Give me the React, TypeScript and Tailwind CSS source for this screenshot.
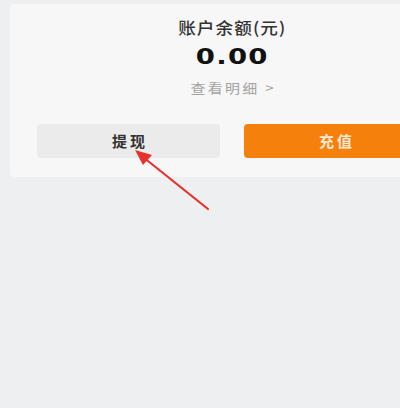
import React from "react";

export default function App() {
  const cjk = { fontFamily: '"Noto Sans CJK SC", "Noto Sans", sans-serif' };
  return (
    <div className="relative h-[408px] w-[400px] overflow-hidden bg-[#eeeff1]">
      <div className="pt-[4px] pl-[10px]">
        <div className="flex w-[444px] flex-col items-center rounded-[4px] bg-[#f7f7f7] pt-[12px] pb-[19px]">
          <div
            className="scale-x-[1.1] pl-[1px] text-[16px] leading-[22px] font-medium tracking-[1px] text-[#333333]"
            style={cjk}
          >
            账户余额(元)
          </div>
          <div
            className="mt-[4px] scale-x-[1.25] pl-[1px] text-[22px] leading-[30px] font-bold tracking-[1px] text-[#111111]"
            style={{ fontFamily: '"DejaVu Sans", sans-serif' }}
          >
            0.00
          </div>
          <div
            className="mt-[7px] scale-x-[1.15] pl-[2px] text-[13px] leading-[18px] tracking-[2px] text-[#a3a3a3]"
            style={cjk}
          >
            查看明细 &gt;
          </div>
          <div className="mt-[27px] flex w-full gap-[24px] px-[27px]">
            <button
              className="flex h-[34px] w-[183px] items-center justify-center rounded-[4px] bg-[#ebebeb] pl-[3px] text-[15px] font-bold tracking-[3px] text-[#333333]"
              style={cjk}
            >
              提现
            </button>
            <button
              className="flex h-[34px] w-[183px] items-center justify-center rounded-[4px] bg-[#f5800b] pl-[3px] text-[15px] font-bold tracking-[3px] text-[#fde8d2]"
              style={cjk}
            >
              充值
            </button>
          </div>
        </div>
      </div>
      <svg
        className="absolute left-0 top-0"
        width="400"
        height="408"
        viewBox="0 0 400 408"
      >
        <line x1="208" y1="209" x2="143" y2="157" stroke="#e8302c" strokeWidth="2.2" strokeLinecap="round" />
        <polygon points="135,150 152,155 143,165" fill="#e8302c" />
      </svg>
    </div>
  );
}
